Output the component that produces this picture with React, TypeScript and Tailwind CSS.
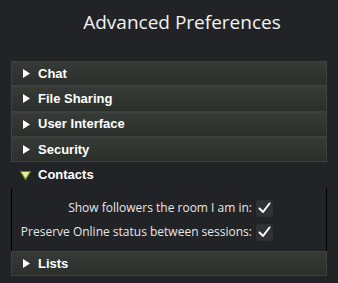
import React from "react";

const sections = ["Chat", "File Sharing", "User Interface", "Security"];

function Arrow({ open }: { open?: boolean }) {
  if (open) {
    return (
      <svg width="11" height="9" viewBox="0 0 11 9" className="shrink-0">
        <path d="M0.5 0.5 L10.5 0.5 L5.5 8.5 Z" fill="#e8f0a0" stroke="#6a8a1a" strokeWidth="1.2" />
      </svg>
    );
  }
  return (
    <svg width="7" height="9" viewBox="0 0 7 9" className="shrink-0">
      <path d="M0 0 L7 4.5 L0 9 Z" fill="#ffffff" />
    </svg>
  );
}

function Header({ label }: { label: string }) {
  return (
    <div className="flex h-[25.3px] items-center gap-[8px] border border-[#3d423e] bg-gradient-to-b from-[#363b37] to-[#2b2f2c] pl-[11px] text-[13px] font-bold text-white">
      <Arrow />
      <span>{label}</span>
    </div>
  );
}

function Check() {
  return (
    <span className="flex h-[17px] w-[17px] items-center justify-center rounded-[3px] bg-[#2f3134]">
      <svg width="13" height="12" viewBox="0 0 13 12">
        <path d="M1.5 6.5 L5 10 L11.5 1.5" fill="none" stroke="#ffffff" strokeWidth="2" strokeLinecap="round" strokeLinejoin="round" />
      </svg>
    </span>
  );
}

export default function App() {
  return (
    <div className="h-[283px] w-[338px] bg-[#222327] font-['Liberation_Sans',sans-serif]">
      {/* Title */}
      <div className="flex h-[61px] items-start justify-center pl-[26px] pt-[8px]">
        <h1 className="font-['Open_Sans',sans-serif] text-[19px] text-[#f2f2f2]">Advanced Preferences</h1>
      </div>

      <div className="mx-[11px] flex w-[316px] flex-col">
        {sections.map((s) => (
          <Header key={s} label={s} />
        ))}

        {/* Contacts (open) */}
        <div className="flex h-[26px] items-center gap-[7px] pl-[9px] text-[13px] font-bold text-white">
          <Arrow open />
          <span>Contacts</span>
        </div>
        <div className="flex h-[63px] flex-col items-end gap-[6px] border-x border-black pr-[53px] pt-[11px] font-['Open_Sans',sans-serif] text-[12px] text-[#e6e6e6]">
          <div className="flex items-center gap-[4px]">
            <span>Show followers the room I am in:</span>
            <Check />
          </div>
          <div className="flex items-center gap-[4px]">
            <span>Preserve Online status between sessions:</span>
            <Check />
          </div>
        </div>

        <Header label="Lists" />
      </div>
    </div>
  );
}
